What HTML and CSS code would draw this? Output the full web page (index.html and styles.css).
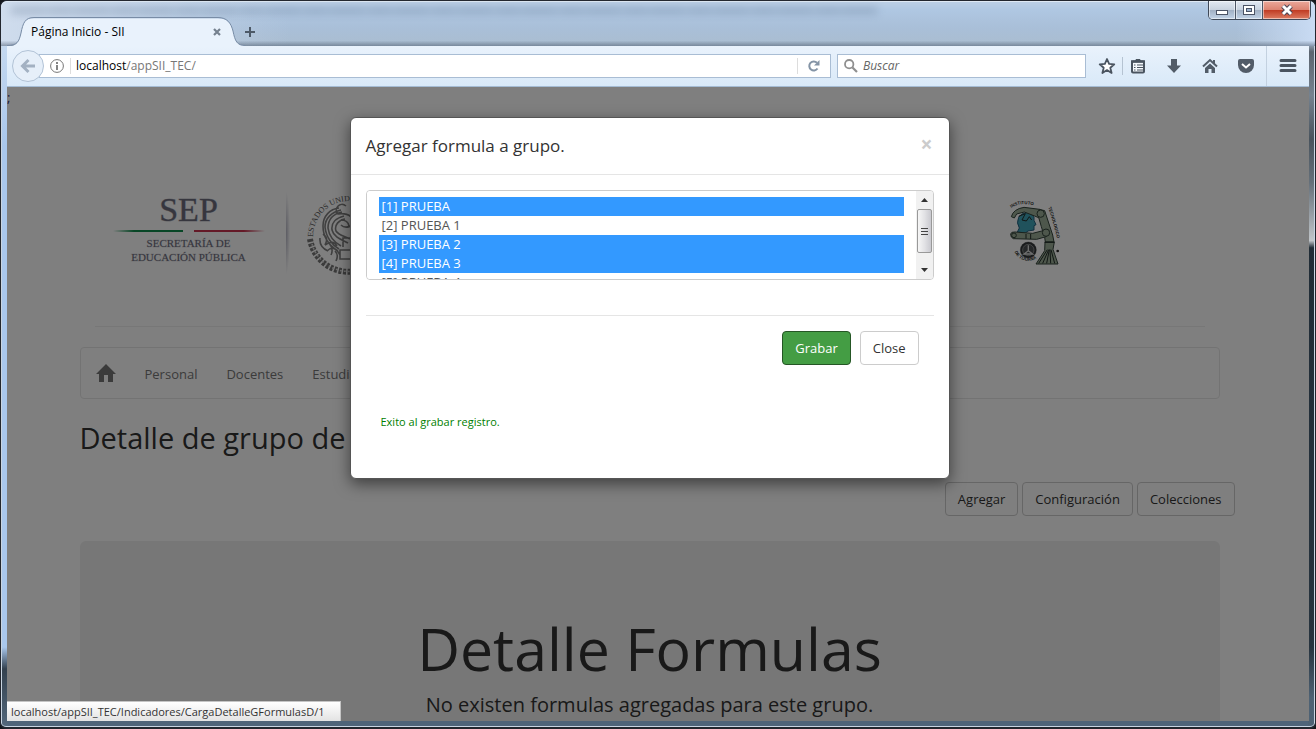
FILE: index.html
```html
<!DOCTYPE html>
<html lang="es">
<head>
<meta charset="utf-8">
<title>Página Inicio - SII</title>
<link rel="stylesheet" href="styles.css">
</head>
<body>
<div class="window">
  <header class="titlebar">
    <div class="glass-text" aria-hidden="true"></div>
    <div class="tab">
      <svg class="tab-shape" viewBox="0 0 238 30" aria-hidden="true"><path d="M0 29.5C10 29.500 12 25 14 16C16 6 18 1.500 27 1.500H211C220 1.500 224 6 226 14C228 24 230 28.500 238 28.500V30H0Z" fill="#e9f2fc"/><path d="M0 28.500C10 28.500 12 25 14 16C16 6 18 .5 27 .5H211C220 .5 224 6 226 14C228 24 230 28.500 238 28.500" fill="none" stroke="#788ca6"/></svg>
      <span class="tab-title">Página Inicio - SII</span>
      <button class="tab-close" aria-label="Cerrar pestaña"><svg width="8" height="8" viewBox="0 0 8 8"><path d="M1 1L7 7M7 1L1 7" stroke="#75818f" stroke-width="2.200"/></svg></button>
    </div>
    <button class="new-tab" aria-label="Nueva pestaña"><svg width="12" height="12" viewBox="0 0 12 12"><path d="M6 1V11M1 6H11" stroke="#4d5967" stroke-width="2"/></svg></button>
    <div class="controls">
      <button class="ctl" aria-label="Minimizar"><svg width="14" height="12" viewBox="0 0 14 12"><rect x="1.500" y="6.500" width="11" height="4" fill="#fff" stroke="#4b5365"/></svg></button>
      <button class="ctl" aria-label="Maximizar"><svg width="14" height="12" viewBox="0 0 14 12"><rect x="1.500" y="1.500" width="11" height="9" fill="#fff" stroke="#4b5365"/><rect x="4.500" y="4.500" width="5" height="3" fill="#9db3cf" stroke="#4b5365"/></svg></button>
      <button class="ctl ctl-close" aria-label="Cerrar"><svg width="14" height="12" viewBox="0 0 14 12"><path d="M3 2L11 10M11 2L3 10" stroke="#4b4454" stroke-width="5"/><path d="M3 2L11 10M11 2L3 10" stroke="#fff" stroke-width="3"/></svg></button>
    </div>
  </header>

  <div class="toolbar">
    <button class="back" aria-label="Atrás"><svg width="16" height="16" viewBox="0 0 16 16"><path d="M8.500 2L2.500 8L8.500 14M3 8H15" fill="none" stroke="#a3b1c2" stroke-width="3"/></svg></button>
    <div class="urlbar">
      <svg width="14" height="14" viewBox="0 0 14 14" aria-hidden="true"><circle cx="7" cy="7" r="6.400" fill="none" stroke="#777"/><path d="M7 3V5M7 6V11" stroke="#777" stroke-width="1.800"/></svg>
      <span class="url"><b>localhost</b>/appSII_TEC/</span>
      <button class="reload" aria-label="Recargar"><svg width="12" height="12" viewBox="0 0 12 12"><path d="M9.500 8.500A4.500 4.500 0 1 1 9 2.800" fill="none" stroke="#8494a6" stroke-width="2"/><path d="M11.500 0V5.500H6Z" fill="#8494a6"/></svg></button>
    </div>
    <label class="search">
      <svg width="14" height="14" viewBox="0 0 14 14" aria-hidden="true"><circle cx="5.200" cy="5.200" r="4.200" fill="none" stroke="#8f8f8f" stroke-width="1.800"/><path d="M8.500 8.500L13 13" stroke="#8f8f8f" stroke-width="2.200"/></svg>
      <input type="text" placeholder="Buscar" aria-label="Buscar">
    </label>
    <nav class="tools">
      <button aria-label="Marcar página"><svg width="18" height="18" viewBox="0 0 18 18"><path d="M9 2L11.100 6.900L16.300 7.300L12.300 10.700L13.600 16L9 13.100L4.400 16L5.700 10.700L1.700 7.300L6.900 6.900Z" fill="#fff" stroke="#4a5460" stroke-width="1.800" stroke-linejoin="round"/></svg></button>
      <button class="ruled" aria-label="Marcadores"><svg width="18" height="18" viewBox="0 0 18 18"><rect x="3" y="4.500" width="12" height="11" rx="1" fill="#f5f9fd" stroke="#4a5460" stroke-width="2"/><path d="M6 4L7 2H11L12 4Z" fill="#4a5460"/><path d="M2 4.500H16" stroke="#4a5460" stroke-width="2.500"/><path d="M5 8H6.500M8 8H14M5 10.500H6.500M8 10.500H14M5 13H6.500M8 13H14" stroke="#4a5460" stroke-width="1.200"/></svg></button>
      <button aria-label="Descargas"><svg width="18" height="18" viewBox="0 0 18 18"><path d="M6 2H12V8.500H16L9 16L2 8.500H6Z" fill="#525c68"/></svg></button>
      <button aria-label="Inicio"><svg width="18" height="18" viewBox="0 0 18 18"><path d="M2 9.500L9 3L16 9.500" fill="none" stroke="#525c68" stroke-width="2"/><path d="M4 11L9 6.500L14 11V16H10.500V12H7.500V16H4ZM12 3H14V7H12Z" fill="#525c68"/></svg></button>
      <button aria-label="Pocket"><svg width="18" height="18" viewBox="0 0 18 18"><path d="M3 2H15Q17 2 17 4V8A8 8 0 0 1 1 8V4Q1 2 3 2Z" fill="#525c68"/><path d="M5 7L9 10.500L13 7" fill="none" stroke="#fff" stroke-width="2"/></svg></button>
      <button class="menu" aria-label="Menú"><svg width="18" height="18" viewBox="0 0 18 18"><path d="M2 3.500H16M2 8.500H16M2 13.500H16" stroke="#4a5460" stroke-width="3" stroke-linecap="round"/></svg></button>
    </nav>
  </div>

  <main class="viewport">
    <div class="page">
      <div class="stray">;</div>
      <div class="container">
        <div class="banner">
          <div class="sep">
            <div class="sep-name">SEP</div>
            <div class="sep-rule"><i></i><i></i></div>
            <div class="sep-sub">SECRETARÍA DE<br>EDUCACIÓN PÚBLICA</div>
          </div>
          <div class="divider"></div>
          <svg class="seal" width="88" height="88" viewBox="0 0 88 88" aria-hidden="true">
            <defs><path id="arc" d="M8 48A36 36 0 0 1 80 48"/></defs>
            <text class="seal-text"><textPath href="#arc">ESTADOS UNIDOS MEXICANOS</textPath></text>
            <path d="M5 50A39 39 0 0 0 82 50" fill="none" stroke="#777" stroke-width="6" stroke-dasharray="3 1.500"/>
            <path d="M7 55A38 38 0 0 0 80 55" fill="none" stroke="#ddd" stroke-width="1.500" stroke-dasharray="2 2"/>
            <g fill="none" stroke="#808080" stroke-width="1.600"><path d="M34 19C25 20 18 27 18 37C18 49 25 57 33 62M36 21C27 23 20 29 20 38C21 48 27 56 34 60M37 23C28 25 23 31 23 39C24 47 29 53 36 57M39 27C31 29 26 34 27 41C29 49 38 51 43 54M40 30C34 31 29 36 31 42C34 47 41 47 45 50M41 17C35 12 28 20 33 25C38 24 46 25 48 31C50 38 40 40 36 36M36 31Q43 31 44 37M18 45Q24 49 20 56Q28 50 32 57M22 62Q29 55 35 66M15 49Q14 58 23 62M35 61H58V70H35ZM38 58V49H51V59M49 48Q59 43 62 31M53 50Q65 46 67 34M45 23Q57 19 65 28M24 54Q29 60 26 66M30 62Q34 66 31 72"/></g>
          </svg>
          <svg class="tec" width="54" height="68" viewBox="56 25 162 204" aria-hidden="true">
            <defs><path id="top-arc" d="M66 52Q103 27 152 54"/><path id="side-arc" d="M177 50Q190 90 208 160"/><path id="low-arc" d="M76 183A43 43 0 0 0 155 186"/></defs>
            <path d="M88 80Q98 64 120 66L134 78V89L140 102L134 105V118L116 121L108 127L84 124L90 112Q80 97 88 80Z" fill="#40a4b8" stroke="#246080" stroke-width="3"/>
            <g fill="#9caf98" stroke="#34443b" stroke-width="3" stroke-linejoin="round">
              <path d="M66 78Q72 55 104 50L151 56L162 70L150 82L136 76L105 64L82 70L75 82Z"/>
              <path d="M150 56L166 60L190 133L194 154H168L166 140L156 108L148 80Z"/>
              <path d="M64 130Q65 123 77 124L130 128L161 120L174 116L181 129L170 138L142 146L72 144Q64 141 64 130Z"/>
              <path d="M167 154H195L191 176L206 220H140L166 180Z"/>
              <circle cx="154" cy="69" r="11"/><circle cx="170" cy="126" r="11"/><circle cx="74" cy="134" r="7"/>
            </g>
            <path d="M88 77L108 69L98 88L111 91L120 78L127 88M148 218L174 177M160 218L178 177M172 218L180 177M184 218L182 177M196 218L185 177M110 130V144M124 130V145M166 155H195" fill="none" stroke="#222c28" stroke-width="3"/>
            <circle cx="117" cy="178" r="24" fill="#34383a" stroke="#222"/><circle cx="117" cy="178" r="17" fill="#4c5052" stroke="#aaa" stroke-width="2"/><path d="M117 164V180L104 190H130L117 180" fill="none" stroke="#ddd" stroke-width="4"/>
            <g class="tec-text"><text><textPath href="#top-arc">INSTITUTO</textPath></text><text><textPath href="#side-arc">TECNOLOGICO</textPath></text><text><textPath href="#low-arc">DE TIJUANA</textPath></text></g>
            <circle cx="205" cy="181" r="4" fill="#222"/>
          </svg>
        </div>
        <hr class="rule">
        <nav class="navbar">
          <a href="#" aria-label="Inicio"><svg width="20" height="20" viewBox="0 0 20 20"><path d="M10 1L20 11H17V19H12V12H8V19H3V11H0Z" fill="#777"/></svg></a>
          <a href="#">Personal</a><a href="#">Docentes</a><a href="#">Estudiantes</a>
        </nav>
        <h2>Detalle de grupo de</h2>
        <div class="actions">
          <button class="btn">Agregar</button>
          <button class="btn">Configuración</button>
          <button class="btn">Colecciones</button>
        </div>
        <section class="jumbotron">
          <h1>Detalle Formulas</h1>
          <p>No existen formulas agregadas para este grupo.</p>
        </section>
      </div>
    </div>

    <div class="backdrop">
      <div class="modal" role="dialog" aria-labelledby="modal-title">
        <div class="modal-header">
          <h4 id="modal-title">Agregar formula a grupo.</h4>
          <button class="close" aria-label="Cerrar">×</button>
        </div>
        <div class="modal-body">
          <div class="listbox">
            <select multiple aria-label="Formulas">
              <option selected>[1] PRUEBA</option>
              <option>[2] PRUEBA 1</option>
              <option selected>[3] PRUEBA 2</option>
              <option selected>[4] PRUEBA 3</option>
              <option>[5] PRUEBA 4</option>
            </select>
            <div class="scroll" aria-hidden="true">
              <svg width="7" height="4" viewBox="0 0 7 4"><path d="M0 4L3.500 0L7 4Z" fill="#333"/></svg>
              <div class="thumb"><i></i><i></i><i></i></div>
              <svg width="7" height="4" viewBox="0 0 7 4"><path d="M0 0H7L3.500 4Z" fill="#333"/></svg>
            </div>
          </div>
          <div class="modal-footer">
            <button class="btn btn-success">Grabar</button>
            <button class="btn">Close</button>
          </div>
          <p class="message">Exito al grabar registro.</p>
        </div>
      </div>
    </div>
    <div class="status">localhost/appSII_TEC/Indicadores/CargaDetalleGFormulasD/1</div>
  </main>
</div>
</body>
</html>
```

FILE: styles.css
```css
* { box-sizing: border-box; }
body {
  margin: 0;
  background: #14171c;
  font: 13px/20px "Open Sans", "Noto Sans", sans-serif;
  color: #333;
}
button, input, select { font: inherit; color: inherit; margin: 0; }
button { padding: 0; border: 0; background: none; }
button svg, a svg { display: block; }

.window {
  display: flex;
  flex-direction: column;
  height: 100vh;
  padding: 0 6px 6px;
  border: 1px solid #22262e;
  border-bottom-width: 2px;
  border-radius: 7px 7px 6px 6px;
  background:
    linear-gradient(#d0e0f2, #a9c7ec 20%, #a9c7ec 89%, #33414f 92%, #54687c) left / 7px 100% no-repeat,
    linear-gradient(#c8dcf4 0 5%, #5b6570 7%, #75828f 13%, #48535d 19%, #65707a 25%, #c0c5c9 33%, #202c36 34%, #26333e 89%, #4e6274 96%) right / 7px 100% no-repeat,
    linear-gradient(#a9c3df, #a9c3df) top / 100% 46px no-repeat,
    #4f6479;
  box-shadow: inset 0 0 0 1px #c9d5e2;
}

/* Window frame */
.titlebar {
  position: relative;
  display: flex;
  align-items: flex-end;
  flex: none;
  height: 45px;
  margin: 0 -6px;
  padding-left: 6px;
  border-radius: 6px 6px 0 0;
  background:
    linear-gradient(transparent 88%, rgba(70, 85, 105, .5)),
    linear-gradient(90deg, #cfdced, transparent 22%, transparent 94%, #c9dbf3),
    linear-gradient(#bdd0e6, #afc7e2 20%, #a9bfd8 60%, #aabdd0);
  box-shadow: inset 0 1px #dfe9f4;
}
.glass-text {
  position: absolute;
  top: 6px;
  left: 10px;
  width: 66%;
  height: 7px;
  background: repeating-linear-gradient(90deg, #6f839c 0 31px, #8297af 34px 37px, #6f839c 40px 58px, #8297af 61px 64px);
  filter: blur(4px);
  opacity: .4;
}
.tab {
  position: relative;
  display: flex;
  align-items: center;
  width: 238px;
  height: 29px;
  padding: 0 20px 0 24px;
}
.tab-shape { position: absolute; left: 0; top: 0; width: 100%; }
.tab-title { position: relative; flex: 1; font-size: 12px; line-height: 16px; color: #000; }
.tab-close { position: relative; padding: 4px; }
.new-tab { margin-left: -1px; padding: 0 0 8px; }
.controls {
  display: flex;
  align-self: flex-start;
  margin-left: auto;
  margin-right: 4px;
  border: 1px solid #3f4857;
  border-top: 0;
  border-radius: 0 0 5px 5px;
  overflow: hidden;
}
.ctl {
  display: grid;
  place-items: center;
  width: 27px;
  height: 18px;
  border-right: 1px solid #4c5666;
  background: linear-gradient(#e2e9f2, #c8d2df 48%, #a0afc3 50%, #c2d3e7);
  box-shadow: inset 0 0 0 1px rgba(255, 255, 255, .5);
}
.ctl-close {
  width: 47px;
  border: 0;
  background: linear-gradient(#eba99b, #dc8472 48%, #bf3a22 50%, #dd7c62);
}

/* Browser toolbar */
.toolbar {
  display: flex;
  align-items: center;
  flex: none;
  height: 41px;
  padding: 0 0 0 5px;
  border-bottom: 1px solid #a5bcd4;
  background: linear-gradient(#e9f2fc, #d9e9f8);
}
.back {
  position: relative;
  z-index: 1;
  display: grid;
  place-items: center;
  width: 32px;
  height: 32px;
  margin-right: -5px;
  border: 1px solid #b2c3d6;
  border-radius: 50%;
  background: #e6eff9;
}
.urlbar, .search {
  display: flex;
  align-items: center;
  height: 24px;
  border: 1px solid #a9bdd4;
  background: #fff;
  font-size: 12px;
  line-height: 16px;
}
.urlbar { flex: 1; padding-left: 10px; }
.url { flex: 1; margin-left: 6px; padding-left: 5px; border-left: 1px solid #ddd; color: #777; }
.url b { font-weight: normal; color: #000; }
.reload { padding: 2px 10px; border-left: 1px solid #ddd; }
.search { flex: 0 1 249px; margin-left: 6px; padding-left: 6px; gap: 5px; }
.search input { flex: 1; min-width: 0; border: 0; padding: 0; outline: 0; background: none; font-style: italic; }
.search input::placeholder { color: #666; opacity: 1; }
.tools { display: flex; align-items: center; margin-left: 12px; gap: 18px; }
.ruled { margin-left: -12px; padding-left: 6px; border-left: 1px solid #b5c3d2; }
.menu { padding: 11px 12px; margin-left: -7px; border-left: 1px solid #c3d1e0; }

/* Page */
.viewport { position: relative; flex: 1; min-height: 0; overflow: hidden; background: #fff; }
.page { height: 100%; padding-right: 17px; overflow: hidden; }
.stray { height: 20px; color: #337; }
.container { max-width: 1140px; margin: 0 auto; }
.banner { display: flex; align-items: center; height: 219px; padding: 32px 158px 0 33px; }
.sep { width: 152px; margin-bottom: 10px; text-align: center; font-family: "Liberation Serif", serif; color: #6c6c7c; }
.sep-name { font-size: 34px; line-height: 36px; -webkit-text-stroke: 1px rgba(108, 108, 124, .4); }
.sep-rule { display: flex; gap: 11px; margin: 2px 0 4px; }
.sep-rule i { flex: 1; height: 2px; background: linear-gradient(90deg, #fff, #108c4c 30%); }
.sep-rule i + i { background: linear-gradient(90deg, #c8324e 70%, #fff); }
.sep-sub { font-size: 11px; line-height: 14px; white-space: nowrap; -webkit-text-stroke: 1px rgba(108, 108, 124, .2); }
.divider { width: 11px; height: 84px; margin: 0 8px 0 21px; background: radial-gradient(ellipse 4px 42px at left, #b0b0c0, transparent), #fff; opacity: .9; }
.seal-text { font: 8px "Liberation Serif", serif; fill: #555; }
.tec { margin-left: auto; }
.tec-text { font: bold 13px "Liberation Sans", sans-serif; fill: #222; }
.rule { height: 1px; margin: 0 15px 20px; border: 0; background: #eee; }
.navbar { display: flex; align-items: center; height: 52px; padding: 2px 15px 0; gap: 29px; border: 1px solid #e7e7e7; border-radius: 4px; }
.navbar a { color: #777; text-decoration: none; }
.navbar svg { margin-bottom: 2px; }
h1, h2, h4, p { margin: 0; font-weight: normal; }
h2 { margin: 22px 0 28px; font-size: 29px; line-height: 33px; }
.actions { display: flex; justify-content: flex-end; gap: 4px; margin-right: -15px; }
.btn { height: 34px; padding: 0 12px; border: 1px solid #ccc; border-radius: 4px; background: #fff; white-space: nowrap; }
.btn-success { border-color: #255625; background: #449d44; color: #fff; }
.jumbotron { height: 260px; margin-top: 25px; padding: 72px 0 0; border-radius: 6px; background: #eee; text-align: center; }
.jumbotron h1 { font-size: 59px; line-height: 70px; }
.jumbotron p { margin-top: 7px; font-size: 20px; line-height: 30px; }

/* Dialog */
.backdrop { position: absolute; inset: 0; padding: 30px 17px 0 0; background: rgba(0, 0, 0, .5); }
.modal { max-width: 600px; margin: 0 auto; border: 1px solid #555; border-radius: 6px; background: #fff; box-shadow: 0 5px 15px rgba(0, 0, 0, .5); }
.modal-header { display: flex; align-items: center; justify-content: space-between; height: 57px; padding: 0 15px; border-bottom: 1px solid #e5e5e5; }
.modal-header h4 { font-size: 17px; line-height: 26px; }
.close { padding: 0 1px 4px 0; font-size: 21px; font-weight: bold; line-height: 20px; color: #ccc; }
.modal-body { padding: 15px 15px 46px; }
.listbox { display: flex; height: 90px; border: 1px solid #ccc; border-radius: 4px; overflow: hidden; }
.listbox select { flex: 1; height: 100%; padding: 6px 12px; border: 0; outline: 0; overflow: hidden; scrollbar-width: none; color: #555; }
.listbox option { height: 19px; min-height: 19px; padding: 0 3px; line-height: 19px; }
.listbox option:checked { background: #39f linear-gradient(#39f, #39f); color: #fff; -webkit-text-fill-color: #fff; }
.scroll { display: flex; flex-direction: column; align-items: center; width: 17px; padding: 7px 0; background: #f1f1f1; }
.thumb { display: flex; flex-direction: column; align-items: center; justify-content: center; gap: 2px; width: 15px; height: 44px; margin: 7px 0 auto; border: 1px solid #999; border-radius: 2px; background: linear-gradient(90deg, #f6f6f6, #e2e2e5 50%, #c9c9cf); }
.thumb i { width: 7px; height: 1px; background: #444; }
.modal-footer { display: flex; justify-content: flex-end; gap: 9px; margin-top: 35px; padding: 15px; border-top: 1px solid #e5e5e5; }
.message { margin: 32px 15px 0; font-size: 11px; line-height: 20px; color: green; }

/* Link preview */
.status { position: absolute; left: 0; bottom: 0; padding: 2px 15px 1px 4px; border: 1px solid #c5c5c5; border-width: 1px 1px 0 0; background: linear-gradient(#fff, #e3e3e3); font-size: 11px; line-height: 16px; }
```
